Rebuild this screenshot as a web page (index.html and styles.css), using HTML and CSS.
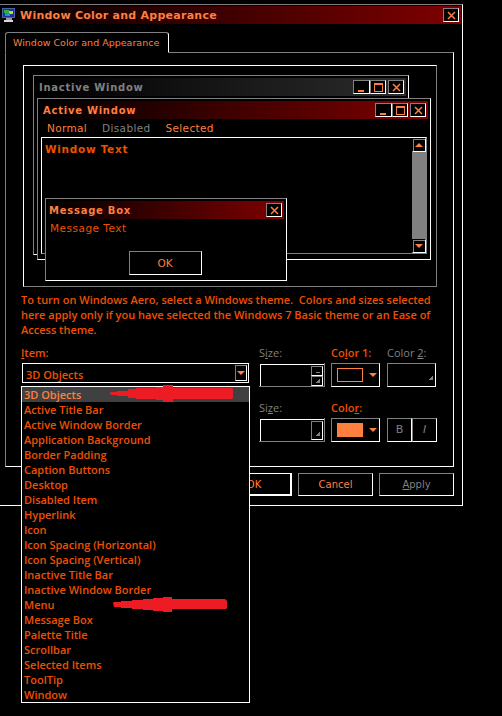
FILE: index.html
```html
<!DOCTYPE html>
<html lang="en">
<head>
    <meta charset="UTF-8">
    <title>Window Color and Appearance</title>
    <link rel="stylesheet" href="styles.css">
</head>
<body>
    <div class="window">
        <div class="titlebar active-title main-title">
            <svg class="app-icon" width="15" height="15" viewBox="0 0 15 15">
                <rect x="1" y="0" width="13" height="10" fill="#4a5fb0"/>
                <rect x="2" y="1" width="11" height="8" fill="#1c2f9a"/>
                <rect x="3" y="2" width="5" height="3" fill="#2fae3a"/>
                <rect x="8" y="3" width="4" height="3" fill="#c9d43a"/>
                <rect x="4" y="5" width="5" height="3" fill="#1f8fd0"/>
                <rect x="5" y="10" width="6" height="2" fill="#9a9a9a"/>
                <rect x="3" y="12" width="9" height="2" fill="#d8d8d8"/>
            </svg>
            <span>Window Color and Appearance</span>
            <span class="cap-btn close-cap"><svg width="9" height="9" viewBox="0 0 9 9"><path d="M1 1l7 7M8 1l-7 7" stroke="#ff7f3f" stroke-width="1.5"/></svg></span>
        </div>

        <div class="tab">Window Color and Appearance</div>

        <div class="pane">
            <div class="preview">
                <div class="mini-window inactive-window">
                    <div class="titlebar inactive-title">
                        <span>Inactive Window</span>
                        <div class="cap-btns">
                            <span class="cap-btn"><i class="min-glyph"></i></span>
                            <span class="cap-btn"><i class="max-glyph"></i></span>
                            <span class="cap-btn x-gap"><svg width="9" height="9" viewBox="0 0 9 9"><path d="M1 1l7 7M8 1l-7 7" stroke="#ff7f3f" stroke-width="1.5"/></svg></span>
                        </div>
                    </div>
                </div>

                <div class="mini-window active-window">
                    <div class="titlebar active-title">
                        <span>Active Window</span>
                        <div class="cap-btns">
                            <span class="cap-btn"><i class="min-glyph"></i></span>
                            <span class="cap-btn"><i class="max-glyph"></i></span>
                            <span class="cap-btn x-gap"><svg width="9" height="9" viewBox="0 0 9 9"><path d="M1 1l7 7M8 1l-7 7" stroke="#ff7f3f" stroke-width="1.5"/></svg></span>
                        </div>
                    </div>
                    <div class="mini-menu">
                        <span>Normal</span>
                        <span class="disabled">Disabled</span>
                        <span>Selected</span>
                    </div>
                    <div class="text-pane">
                        <div class="window-text">Window Text</div>
                        <div class="scrollbar">
                            <span class="scroll-btn"><i class="arrow-up"></i></span>
                            <div class="scroll-track"></div>
                            <span class="scroll-btn"><i class="arrow-down"></i></span>
                        </div>
                    </div>
                </div>

                <div class="mini-window message-box">
                    <div class="titlebar active-title">
                        <span>Message Box</span>
                        <span class="cap-btn close-cap"><svg width="9" height="9" viewBox="0 0 9 9"><path d="M1 1l7 7M8 1l-7 7" stroke="#ff7f3f" stroke-width="1.5"/></svg></span>
                    </div>
                    <div class="message-text">Message Text</div>
                    <div class="message-actions"><span class="ok-btn">OK</span></div>
                </div>
            </div>

            <p class="info">To turn on Windows Aero, select a Windows theme.&nbsp; Colors and sizes selected here apply only if you have selected the Windows 7 Basic theme or an Ease of Access theme.</p>

            <div class="form">
                <div class="field">
                    <label class="bold-label"><u>I</u>tem:</label>
                    <div class="combo">
                        <span>3D Objects</span>
                        <span class="combo-btn"><i class="arrow-down"></i></span>
                    </div>
                </div>
                <div class="field">
                    <label class="off-label">S<u>i</u>ze:</label>
                    <div class="size-box">
                        <div class="size-inner">
                            <div class="spin">
                                <span class="spin-btn"><b class="dash"></b></span>
                                <span class="spin-btn"><b class="tick"></b></span>
                            </div>
                        </div>
                    </div>
                </div>
                <div class="field">
                    <label class="bold-label">Co<u>l</u>or 1:</label>
                    <div class="color-btn">
                        <span class="swatch swatch-empty"></span>
                        <i class="arrow-down"></i>
                    </div>
                </div>
                <div class="field">
                    <label class="off-label">Color <u>2</u>:</label>
                    <div class="color-btn off-box"><b class="tick"></b></div>
                </div>

                <div class="field"></div>
                <div class="field">
                    <label class="off-label">Si<u>z</u>e:</label>
                    <div class="size-box">
                        <div class="size-inner">
                            <div class="spin"><span class="spin-btn spin-one"><b class="tick"></b></span></div>
                        </div>
                    </div>
                </div>
                <div class="field">
                    <label class="bold-label">Colo<u>r</u>:</label>
                    <div class="color-btn">
                        <span class="swatch swatch-full"></span>
                        <i class="arrow-down"></i>
                    </div>
                </div>
                <div class="field">
                    <label class="off-label">&nbsp;</label>
                    <div class="style-btns">
                        <span class="style-btn">B</span>
                        <span class="style-btn italic">I</span>
                    </div>
                </div>
            </div>
        </div>

        <div class="footer">
            <span class="btn default-btn">OK</span>
            <span class="btn">Cancel</span>
            <span class="btn off-btn"><u>A</u>pply</span>
        </div>
    </div>

    <ul class="item-list">
        <li class="current">3D Objects</li>
        <li>Active Title Bar</li>
        <li>Active Window Border</li>
        <li>Application Background</li>
        <li>Border Padding</li>
        <li>Caption Buttons</li>
        <li>Desktop</li>
        <li>Disabled Item</li>
        <li>Hyperlink</li>
        <li>Icon</li>
        <li>Icon Spacing (Horizontal)</li>
        <li>Icon Spacing (Vertical)</li>
        <li>Inactive Title Bar</li>
        <li>Inactive Window Border</li>
        <li>Menu</li>
        <li>Message Box</li>
        <li>Palette Title</li>
        <li>Scrollbar</li>
        <li>Selected Items</li>
        <li>ToolTip</li>
        <li>Window</li>
    </ul>

    <!-- red marker scribbles drawn over the list -->
    <svg class="scribble scribble-top" width="124" height="17" viewBox="0 0 124 17">
        <path d="M0 8L1 7H7V6H18V4H26V3H46V2H53V0H63V3H122L123 4V13L122 14H63V17H53V15H46V14H26V13H18V11H7V10H1Z" fill="#ed1c24"/>
    </svg>
    <svg class="scribble scribble-bottom" width="114" height="15" viewBox="0 0 114 15">
        <path d="M0 6L1 5H8V4H19V3H30V2H40V1H50V0H59V2H112L114 4V11L113 12H59V15H50V14H40V13H30V12H19V11H8V10H1Z" fill="#ed1c24"/>
    </svg>
</body>
</html>
```

FILE: styles.css
```css
* {
    box-sizing: border-box;
}
body {
    margin: 0;
    height: 716px;
    overflow: hidden;
    position: relative;
    background-color: #000;
    color: #ff7f3f;
    font-family: "Liberation Sans", Arial, sans-serif;
    font-size: 12px;
}
.window {
    width: 463px;
    height: 502px;
    margin-top: 4px;
    padding-top: 1px;
    border-top: 1px solid #808080;
    border-right: 1px solid #fff;
    border-bottom: 1px solid #fff;
}
.titlebar {
    display: flex;
    align-items: center;
    justify-content: space-between;
    height: 18px;
    padding: 0 2px 0 3px;
    font-family: "DejaVu Sans", sans-serif;
    font-size: 10px;
    font-weight: bold;
    letter-spacing: 0.75px;
}
.active-title {
    background: linear-gradient(to right, #000, #800000);
}
.inactive-title {
    background: linear-gradient(to right, #000, #2c2c2c);
    color: #808080;
}
.main-title {
    justify-content: flex-start;
    width: 461px;
    padding: 0 2px 0 1px;
    font-size: 11px;
    letter-spacing: 0.25px;
}
.main-title .app-icon {
    margin-right: 4px;
    flex: none;
}
.main-title .close-cap {
    margin-left: auto;
}
.message-box .titlebar {
    padding-left: 1px;
}

/* caption buttons */
.cap-btns {
    display: flex;
}
.cap-btn {
    display: flex;
    align-items: center;
    justify-content: center;
    width: 16px;
    height: 14px;
    background-color: #000;
    border: 1px solid;
    border-color: #808080 #fff #fff #808080;
}
.cap-btns .cap-btn:first-child {
    width: 17px;
}
.x-gap {
    margin-left: 2px;
}
.min-glyph {
    display: block;
    width: 6px;
    height: 2px;
    margin-top: 7px;
    margin-right: 2px;
    background-color: #ff7f3f;
}
.max-glyph {
    display: block;
    width: 9px;
    height: 9px;
    border: 1px solid #ff7f3f;
    border-top-width: 2px;
}

/* tab strip */
.tab {
    position: relative;
    z-index: 1;
    width: 164px;
    height: 21px;
    margin: 8px 0 -1px 5px;
    padding: 2px 0 0 7px;
    background-color: #000;
    border: 1px solid;
    border-color: #808080 #fff #000 #808080;
    border-radius: 3px 3px 0 0;
    line-height: 15px;
    font-family: "DejaVu Sans", sans-serif;
    font-size: 9.5px;
    white-space: nowrap;
}
.pane {
    width: 449px;
    height: 415px;
    margin-left: 5px;
    padding: 12px 0 0 15px;
    border: 1px solid;
    border-color: #808080 #fff #fff #808080;
}

/* preview area */
.preview {
    position: relative;
    width: 414px;
    height: 222px;
    margin-left: 2px;
    border: 1px solid;
    border-color: #fff #808080 #808080 #fff;
}
.mini-window {
    position: absolute;
    padding: 2px;
    background-color: #000;
    border: 1px solid;
    border-color: #808080 #fff #fff #808080;
}
.inactive-window {
    left: 9px;
    top: 9px;
    width: 376px;
    height: 180px;
}
.active-window {
    left: 13px;
    top: 32px;
    width: 394px;
    height: 162px;
}
.message-box {
    left: 21px;
    top: 132px;
    width: 242px;
    height: 83px;
}
.mini-menu {
    display: flex;
    gap: 15px;
    height: 18px;
    padding-left: 7px;
    align-items: center;
    font-family: "DejaVu Sans", sans-serif;
    font-size: 10.5px;
    letter-spacing: 0.35px;
}
.disabled {
    color: #808080;
}
.text-pane {
    display: flex;
    justify-content: space-between;
    width: 386px;
    height: 117px;
    margin-left: 1px;
    border: 1px solid;
    border-color: #fff #808080 #808080 #fff;
}
.window-text {
    padding: 5px 0 0 3px;
    color: #ee5000;
    font-family: "DejaVu Sans", sans-serif;
    font-size: 10.5px;
    font-weight: bold;
    letter-spacing: 0.7px;
}
.scrollbar {
    display: flex;
    flex-direction: column;
    width: 14px;
}
.scroll-btn {
    display: flex;
    align-items: center;
    justify-content: center;
    height: 14px;
    flex: none;
    border: 1px solid;
    border-color: #000 #fff #fff #000;
    box-shadow: inset 1px 1px 0 #808080;
}
.scroll-track {
    flex: 1;
    background-color: #808080;
}
.arrow-up,
.arrow-down {
    display: block;
    width: 0;
    height: 0;
    border-left: 4px solid transparent;
    border-right: 4px solid transparent;
}
.arrow-up {
    border-bottom: 4px solid #ff7f3f;
}
.arrow-down {
    border-top: 4px solid #ff7f3f;
}
.message-text {
    height: 20px;
    padding: 3px 0 0 2px;
    color: #ee5000;
    font-family: "DejaVu Sans", sans-serif;
    font-size: 10.5px;
    letter-spacing: 0.5px;
}
.message-actions {
    display: flex;
    justify-content: center;
    padding: 12px 2px 0 0;
}
.ok-btn {
    width: 73px;
    height: 24px;
    text-align: center;
    line-height: 22px;
    font-family: "DejaVu Sans", sans-serif;
    font-size: 10.5px;
    border: 1px solid;
    border-color: #808080 #fff #fff #808080;
}

/* explanation and controls */
.info {
    width: 420px;
    margin: 5px 0 0;
    line-height: 15px;
    color: #ee5000;
    font-family: "Open Sans", sans-serif;
    font-size: 11px;
    font-weight: 600;
}
.form {
    display: grid;
    grid-template-columns: 238px 72px 56px 66px;
    row-gap: 13px;
    margin-top: 8px;
}
.field label {
    display: block;
    height: 15px;
    margin-bottom: 3px;
    line-height: 15px;
    font-family: "Open Sans", sans-serif;
    font-size: 11px;
    white-space: nowrap;
}
.field .bold-label {
    color: #ee5000;
    font-weight: 600;
}
.field .off-label {
    color: #808080;
}
.combo {
    display: flex;
    align-items: center;
    justify-content: space-between;
    width: 227px;
    height: 20px;
    margin: 2px 0 0 1px;
    padding: 0 1px 0 3px;
    border: 1px solid #fff;
    color: #ee5000;
    font-family: "Open Sans", sans-serif;
    font-size: 11px;
    font-weight: 600;
}
.combo > span:first-child {
    padding-top: 2px;
}
.combo-btn {
    display: flex;
    align-items: center;
    justify-content: center;
    width: 12px;
    height: 16px;
    border: 1px solid;
    border-color: #808080 #fff #fff #808080;
}
.size-box {
    width: 66px;
    height: 24px;
    padding: 1px 0 0 1px;
    border-right: 1px solid #808080;
    border-bottom: 1px solid #808080;
}
.size-inner {
    display: flex;
    justify-content: flex-end;
    height: 22px;
    padding: 1px 1px 0 0;
    border-top: 1px solid #fff;
    border-left: 1px solid #fff;
}
.spin {
    display: flex;
    flex-direction: column;
    width: 12px;
}
.spin-btn {
    display: flex;
    align-items: flex-end;
    justify-content: flex-end;
    height: 10px;
    padding: 0 2px 2px 0;
    border: 1px solid;
    border-color: #808080 #fff #fff #808080;
}
.spin-one {
    height: 19px;
    padding-bottom: 3px;
}
.tick {
    display: block;
    width: 4px;
    height: 4px;
    background: linear-gradient(135deg, transparent 50%, #808080 50%);
}
.dash {
    display: block;
    width: 4px;
    height: 1px;
    background-color: #808080;
}
.color-btn {
    display: flex;
    align-items: center;
    gap: 5px;
    width: 49px;
    height: 24px;
    padding-left: 5px;
    border: 1px solid;
    border-color: #808080 #fff #fff #808080;
}
.color-btn .arrow-down {
    margin-left: 1px;
}
.off-box {
    justify-content: flex-end;
    align-items: flex-end;
    padding: 0 2px 6px 0;
}
.swatch {
    display: block;
    width: 26px;
    height: 14px;
}
.swatch-empty {
    border: 1px solid #ff7f3f;
}
.swatch-full {
    background-color: #ff7f3f;
}
.style-btns {
    display: flex;
}
.style-btn {
    width: 25px;
    height: 24px;
    color: #808080;
    text-align: center;
    line-height: 22px;
    font-family: "DejaVu Sans", sans-serif;
    font-size: 11px;
    border: 1px solid;
    border-color: #808080 #fff #fff #808080;
}
.italic {
    font-style: italic;
}

/* bottom buttons */
.footer {
    display: flex;
    gap: 6px;
    justify-content: flex-end;
    width: 454px;
    margin-top: 6px;
}
.btn {
    width: 75px;
    height: 23px;
    text-align: center;
    line-height: 21px;
    font-family: "DejaVu Sans", sans-serif;
    font-size: 10px;
    border: 1px solid;
    border-color: #808080 #fff #fff #808080;
}
.default-btn {
    border: 1px solid #fff;
    border-right-width: 2px;
    border-bottom-width: 2px;
}
.off-btn {
    color: #808080;
}

/* dropdown list lies over the dialog */
.item-list {
    position: absolute;
    left: 21px;
    top: 386px;
    width: 229px;
    height: 317px;
    margin: 0;
    padding: 0;
    list-style: none;
    background-color: #000;
    border: 1px solid #fff;
    color: #ee5000;
    font-family: "Open Sans", sans-serif;
    font-size: 11px;
    font-weight: 600;
}
.item-list li {
    height: 15px;
    padding-left: 2px;
    line-height: 15px;
}
.item-list .current {
    background-color: #404040;
    color: #ff7f3f;
}
.scribble {
    position: absolute;
}
.scribble-top {
    left: 110px;
    top: 385px;
}
.scribble-bottom {
    left: 113px;
    top: 597px;
}
```
